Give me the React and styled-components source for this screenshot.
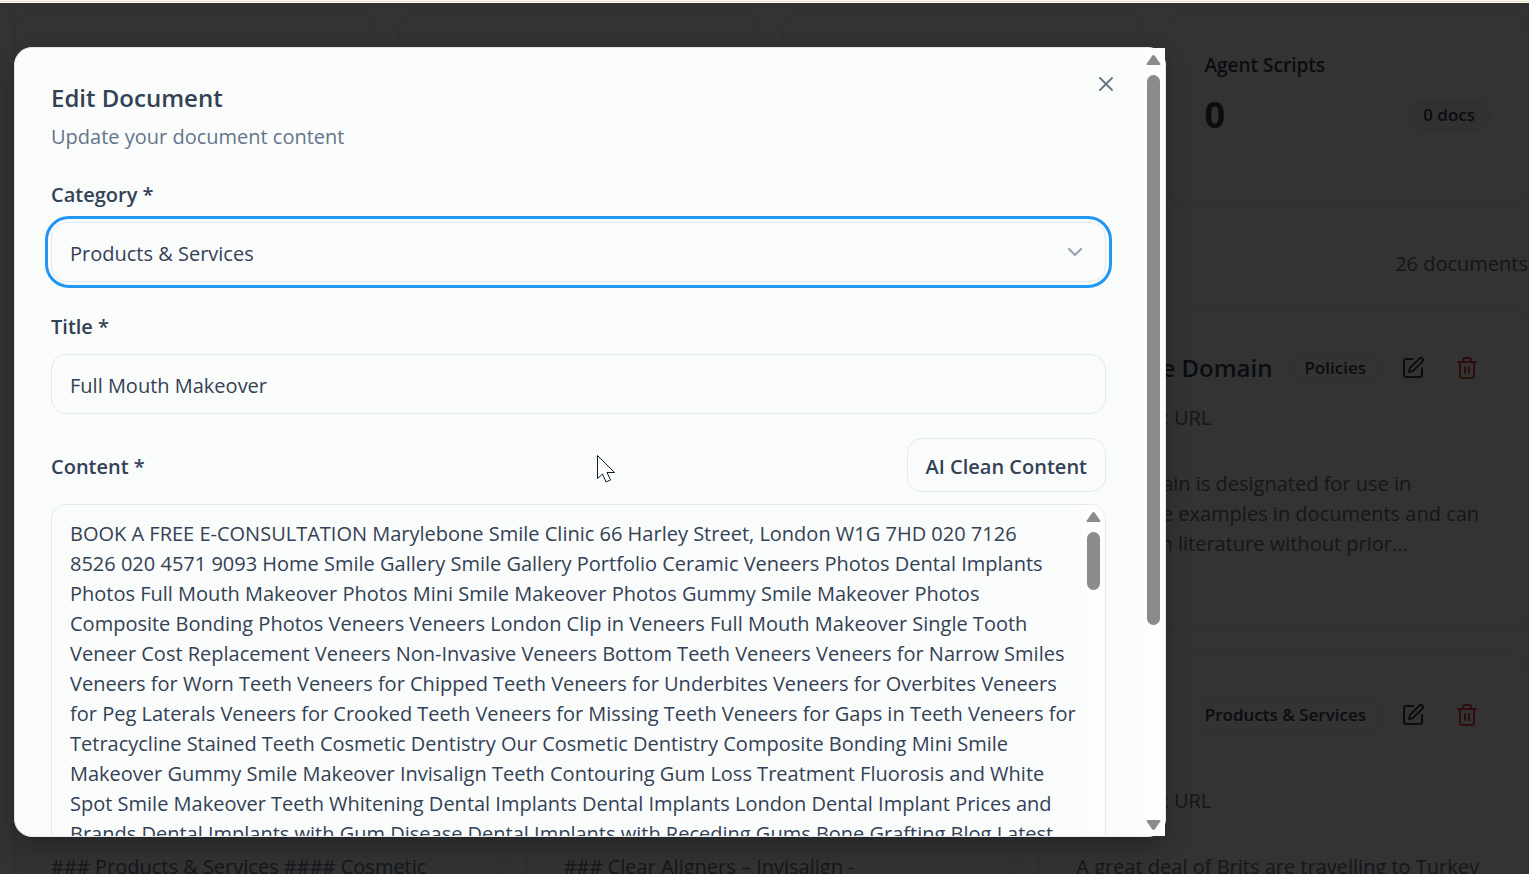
import React from 'react';
import styled, { createGlobalStyle } from 'styled-components';
import { X, ChevronDown, SquarePen, Trash2 } from 'lucide-react';

const GlobalStyle = createGlobalStyle`
  *, *::before, *::after { box-sizing: border-box; }
  body {
    margin: 0;
    overflow: hidden;
    background: #fafcfb;
    color: #334155;
    font-family: "Open Sans", "Noto Sans", sans-serif;
    font-size: 20px;
    line-height: 30px;
  }
  button, input, select, textarea { font: inherit; color: inherit; }
  h1, h2, h3, p { margin: 0; }
`;

const Screen = styled.div`
  position: relative;
  height: 100vh;
  overflow: hidden;
`;

const TopStrip = styled.div`
  position: relative;
  z-index: 3;
  height: 3px;
  background: linear-gradient(#fffaf0 1px, #e6dcc8 1px, #e6dcc8 2px, #fffaf0 2px);
`;

const Page = styled.main`
  display: flex;
  flex-direction: column;
  margin-left: 13px;
  padding: 9px 1px 0 0;
  border-left: 1px solid #e2e8f0;
`;

const Stats = styled.section`
  display: grid;
  grid-template-columns: repeat(4, 1fr);
  gap: 24px;
`;

const Card = styled.article`
  border: 1px solid #e9edf2;
  border-radius: 18px;
  box-shadow: 0 1px 3px rgba(0, 0, 0, 0.06);
  min-width: 0;
`;

const StatCard = styled(Card)`
  height: 193px;
  padding: 36px;
`;

const StatName = styled.h3`
  font-size: 19px;
  font-weight: 600;
  line-height: 32px;
`;

const StatRow = styled.div`
  display: flex;
  align-items: center;
  justify-content: space-between;
  margin-top: 10px;
`;

const StatValue = styled.strong`
  font-size: 36px;
  font-weight: 700;
  line-height: 48px;
`;

const Badge = styled.span`
  display: inline-flex;
  align-items: center;
  height: 32px;
  padding: 0 15px;
  border: 1px solid ${(p) => (p.$filled ? 'transparent' : '#e2e8f0')};
  border-radius: 16px;
  background: ${(p) => (p.$filled ? '#f3f4f6' : 'transparent')};
  font-size: 17px;
  font-weight: 600;
  white-space: nowrap;
`;

const Count = styled.p`
  height: 102px;
  padding-top: 44px;
  color: #64748b;
  text-align: right;
`;

const Docs = styled.section`
  display: grid;
  grid-template-columns: repeat(3, 1fr);
  gap: 24px;
`;

const DocCard = styled(Card)`
  height: 323px;
  padding: 36px;
`;

const DocHead = styled.header`
  display: flex;
  align-items: center;
  height: 48px;
`;

const DocTitle = styled.h2`
  flex: 1;
  overflow: hidden;
  font-size: 24px;
  font-weight: 600;
  line-height: 36px;
  white-space: nowrap;
`;

const IconButton = styled.button`
  display: flex;
  align-items: center;
  justify-content: center;
  width: 54px;
  height: 48px;
  padding: 0;
  border: 0;
  background: none;
  color: ${(p) => (p.$danger ? '#ef4444' : 'inherit')};
`;

const Actions = styled.div`
  display: flex;
  margin-left: 4px;
  margin-right: -3px;
`;

const DocSource = styled.p`
  margin-top: ${(p) => (p.$tall ? '47px' : '11px')};
  color: #64748b;
`;

const DocText = styled.p`
  margin-top: 36px;
  color: #64748b;
  white-space: pre-line;
`;

const Overlay = styled.div`
  position: absolute;
  inset: 3px 0 0;
  z-index: 2;
  display: flex;
  padding: 44px 363px 37px 14px;
  background: rgba(0, 0, 0, 0.8);
`;

const Dialog = styled.div`
  display: flex;
  flex: 1;
  min-width: 0;
  border: 1px solid #e2e8f0;
  border-radius: 18px;
  background: #fafcfb;
  box-shadow: 0 12px 24px rgba(0, 0, 0, 0.25);
`;

const DialogBody = styled.form`
  position: relative;
  flex: 1;
  min-width: 0;
  padding: 36px 36px 0;
  overflow: hidden;
  border-radius: 17px 0 0 17px;
`;

const CloseButton = styled.button`
  position: absolute;
  top: 24px;
  right: 24px;
  display: flex;
  padding: 0;
  border: 0;
  background: none;
  color: #6b7688;
`;

const DialogTitle = styled.h1`
  font-size: 24px;
  font-weight: 600;
  line-height: 28px;
`;

const DialogHint = styled.p`
  margin-top: 10px;
  color: #64748b;
`;

const Field = styled.div`
  display: flex;
  flex-direction: column;
  gap: 12px;
  margin-top: ${(p) => p.$space}px;
`;

const Label = styled.label`
  font-weight: 600;
`;

const SelectBox = styled.div`
  position: relative;
  display: flex;
  height: 60px;
  border-radius: 18px;
  outline: 3px solid #2196f3;
  outline-offset: 3px;
  svg { position: absolute; right: 19px; top: 18px; color: #94a0ae; pointer-events: none; }
`;

const Select = styled.select`
  flex: 1;
  padding: 4px 18px 0;
  border: 1px solid #e2e8f0;
  border-radius: 15px;
  background: #fafcfb;
  appearance: none;
  outline: none;
`;

const Input = styled.input`
  height: 60px;
  padding: 2px 18px 0;
  border: 1px solid #e2e8f0;
  border-radius: 15px;
  background: #fafcfb;
`;

const ContentHead = styled.div`
  display: flex;
  align-items: center;
  justify-content: space-between;
  ${Label} { padding-top: 4px; }
`;

const CleanButton = styled.button`
  height: 54px;
  padding: 4px 18px 0;
  border: 1px solid #e2e8f0;
  border-radius: 15px;
  background: #fafcfb;
  font-weight: 600;
`;

const Editor = styled.div`
  display: flex;
  height: 450px;
  border: 1px solid #e2e8f0;
  border-radius: 15px;
  overflow: hidden;
`;

const TextArea = styled.textarea`
  flex: 1;
  min-width: 0;
  padding: 14px 0 14px 18px;
  border: 0;
  background: transparent;
  resize: none;
  overflow: hidden;
  white-space: pre;
  outline: none;
`;

const Track = styled.div`
  display: flex;
  flex-direction: column;
  align-items: center;
  flex: none;
  width: 23px;
  padding: 6px 0 5px;
  background: #fdfdfd;
`;

const Thumb = styled.div`
  width: 13px;
  height: ${(p) => (p.$long ? 'calc(71% - 2px)' : '58px')};
  margin: 9px 0 auto;
  border-radius: 7px;
  background: #8b8b8b;
`;

const Pointer = styled.svg`
  position: absolute;
  left: 597px;
  top: 454px;
  z-index: 4;
`;

const Arrow = ({ down }) => (
  <svg width="15" height="12" viewBox="0 0 15 12" aria-hidden="true">
    <path
      d={down ? 'M1.5 1h12q1.5 0 .7 1.5L9 10q-1.5 2-3 0L.8 2.5Q0 1 1.5 1z' : 'M1.5 11h12q1.5 0 .7-1.5L9 2q-1.5-2-3 0L.8 9.5Q0 11 1.5 11z'}
      fill="#8b8b8b"
    />
  </svg>
);

const Scrollbar = ({ long }) => (
  <Track aria-hidden="true">
    <Arrow />
    <Thumb $long={long} />
    <Arrow down />
  </Track>
);

const stats = ['Products & Services', 'Policies', 'FAQs', 'Agent Scripts'];

const docs = [
  { id: 1, title: 'Dental Implants', tag: 'FAQs', text: '' },
  { id: 2, title: 'Smile Gallery', tag: 'FAQs', text: '' },
  {
    id: 3,
    title: 'Example Domain',
    tag: 'Policies',
    text: 'This domain is designated for use in\nillustrative examples in documents and can\nbe used in literature without prior...',
  },
  { id: 4, title: 'Services', tag: 'Products & Services', tall: true, text: '### Products & Services #### Cosmetic' },
  { id: 5, title: 'Aligners', tag: 'Products & Services', tall: true, text: '### Clear Aligners – Invisalign -' },
  { id: 6, title: '', tag: 'Products & Services', tall: true, text: 'A great deal of Brits are travelling to Turkey' },
];

const content = [
  'BOOK A FREE E-CONSULTATION Marylebone Smile Clinic 66 Harley Street, London W1G 7HD 020 7126',
  '8526 020 4571 9093 Home Smile Gallery Smile Gallery Portfolio Ceramic Veneers Photos Dental Implants',
  'Photos Full Mouth Makeover Photos Mini Smile Makeover Photos Gummy Smile Makeover Photos',
  'Composite Bonding Photos Veneers Veneers London Clip in Veneers Full Mouth Makeover Single Tooth',
  'Veneer Cost Replacement Veneers Non-Invasive Veneers Bottom Teeth Veneers Veneers for Narrow Smiles',
  'Veneers for Worn Teeth Veneers for Chipped Teeth Veneers for Underbites Veneers for Overbites Veneers',
  'for Peg Laterals Veneers for Crooked Teeth Veneers for Missing Teeth Veneers for Gaps in Teeth Veneers for',
  'Tetracycline Stained Teeth Cosmetic Dentistry Our Cosmetic Dentistry Composite Bonding Mini Smile',
  'Makeover Gummy Smile Makeover Invisalign Teeth Contouring Gum Loss Treatment Fluorosis and White',
  'Spot Smile Makeover Teeth Whitening Dental Implants Dental Implants London Dental Implant Prices and',
  'Brands Dental Implants with Gum Disease Dental Implants with Receding Gums Bone Grafting Blog Latest',
].join('\n');

export default function App() {
  return (
    <Screen>
      <GlobalStyle />
      <TopStrip />
      <Page>
        <Stats>
          {stats.map((name) => (
            <StatCard key={name}>
              <StatName>{name}</StatName>
              <StatRow>
                <StatValue>0</StatValue>
                <Badge $filled>0 docs</Badge>
              </StatRow>
            </StatCard>
          ))}
        </Stats>
        <Count>26 documents</Count>
        <Docs>
          {docs.map((doc) => (
            <DocCard key={doc.id}>
              <DocHead>
                <DocTitle>{doc.title}</DocTitle>
                <Badge>{doc.tag}</Badge>
                <Actions>
                  <IconButton type="button" aria-label="Edit"><SquarePen size={24} /></IconButton>
                  <IconButton type="button" aria-label="Delete" $danger><Trash2 size={24} /></IconButton>
                </Actions>
              </DocHead>
              <DocSource $tall={doc.tall}>Imported: URL</DocSource>
              <DocText>{doc.text}</DocText>
            </DocCard>
          ))}
        </Docs>
      </Page>
      <Overlay>
        <Dialog role="dialog" aria-modal="true" aria-labelledby="dialog-title">
          <DialogBody>
            <CloseButton type="button" aria-label="Close"><X size={24} strokeWidth={2} /></CloseButton>
            <DialogTitle id="dialog-title">Edit Document</DialogTitle>
            <DialogHint>Update your document content</DialogHint>
            <Field $space={28}>
              <Label htmlFor="category">Category *</Label>
              <SelectBox>
                <Select id="category" defaultValue="Products & Services">
                  <option>Products &amp; Services</option>
                </Select>
                <ChevronDown size={24} />
              </SelectBox>
            </Field>
            <Field $space={30}>
              <Label htmlFor="title">Title *</Label>
              <Input id="title" defaultValue="Full Mouth Makeover" />
            </Field>
            <Field $space={24}>
              <ContentHead>
                <Label htmlFor="content">Content *</Label>
                <CleanButton type="button">AI Clean Content</CleanButton>
              </ContentHead>
              <Editor>
                <TextArea id="content" defaultValue={content} />
                <Scrollbar />
              </Editor>
            </Field>
          </DialogBody>
          <Scrollbar long />
        </Dialog>
      </Overlay>
      <Pointer width="20" height="29" viewBox="0 0 20 29" aria-hidden="true">
        <path d="M.5 1.500v23l5-4.500 3.500 8 4.500-2-3.500-7.500h7.500z" fill="#fff" stroke="#111827" />
      </Pointer>
    </Screen>
  );
}
